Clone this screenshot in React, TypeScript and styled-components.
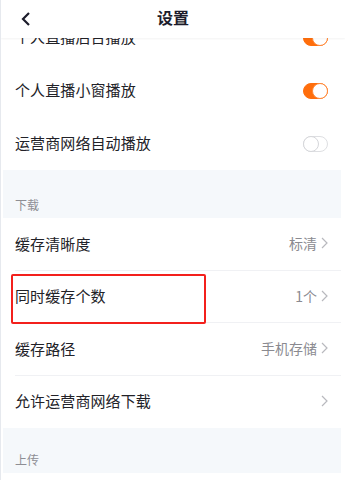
import React from "react";
import styled, { createGlobalStyle } from "styled-components";

const Global = createGlobalStyle`
  html, body { margin: 0; padding: 0; background: #fff; }
  body { font-family: "Noto Sans CJK SC", "Noto Sans", sans-serif; }
`;

const Screen = styled.div`
  position: relative;
  width: 345px;
  height: 480px;
  overflow: hidden;
  background: #fff;
  border-left: 1px solid #e6e9ee;
  box-sizing: border-box;
`;

const Header = styled.div`
  position: absolute;
  top: 0;
  left: 0;
  right: 0;
  height: 38px;
  background: #fff;
  display: grid;
  grid-template-columns: 44px 1fr 44px;
  align-items: center;
  box-shadow: 0 1px 2px rgba(0, 0, 0, 0.05);
  z-index: 2;
`;

const Back = styled.div`
  display: flex;
  align-items: center;
  justify-content: center;
  padding-left: 6px;
  height: 100%;
`;

const Title = styled.div`
  text-align: center;
  font-size: 16px;
  font-weight: 700;
  color: #1c1c2b;
  margin-top: -4px;
`;

const List = styled.div`
  padding: 11px 4px 0 2px;
  display: flex;
  flex-direction: column;
`;

const Row = styled.div<{ $divider?: boolean; $h?: number }>`
  height: ${(p) => p.$h ?? 53}px;
  flex: none;
  display: flex;
  align-items: center;
  justify-content: space-between;
  padding: 0 13px 0 12px;
  position: relative;
  background: #fff;
  ${(p) =>
    p.$divider
      ? `&::after { content: ""; position: absolute; left: 12px; right: 0; bottom: 0; height: 1px; background: #f0f1f4; }`
      : ""}
`;

const Label = styled.span`
  font-size: 15px;
  color: #222228;
  letter-spacing: 0.1px;
  margin-top: -2px;
`;

const Highlight = styled.div`
  position: absolute;
  left: 8px;
  top: 3px;
  width: 195px;
  height: 50px;
  border: 2px solid #f3201c;
  border-radius: 2px;
  box-sizing: border-box;
  pointer-events: none;
  z-index: 1;
`;

const Right = styled.span`
  display: flex;
  align-items: center;
  gap: 4px;
  color: #8a8a90;
  font-size: 14px;
  margin-top: -2px;
`;

const Section = styled.div<{ $h: number }>`
  height: ${(p) => p.$h}px;
  flex: none;
  background: #f5f8fb;
  display: flex;
  align-items: flex-end;
  padding: 0 12px 5px;
  box-sizing: border-box;
  font-size: 12px;
  color: #8e8e94;
`;

const Toggle = styled.div<{ $on?: boolean }>`
  width: 25px;
  height: 16px;
  border-radius: 8px;
  box-sizing: border-box;
  background: ${(p) => (p.$on ? "#ff6e0c" : "#fff")};
  border: 1px solid ${(p) => (p.$on ? "#ff6e0c" : "#dedfe2")};
  position: relative;
  &::after {
    content: "";
    position: absolute;
    top: -1px;
    ${(p) => (p.$on ? "right: -1px;" : "left: -1px;")}
    width: 16px;
    height: 16px;
    border-radius: 50%;
    background: #fff;
    box-sizing: border-box;
    border: 1px solid ${(p) => (p.$on ? "#ff8a3a" : "#d5d6da")};
  }
`;

const Chevron = () => (
  <svg width="7" height="12" viewBox="0 0 7 12">
    <path d="M1 1l5 5-5 5" fill="none" stroke="#b8b9be" strokeWidth="1.2" />
  </svg>
);

export default function App() {
  return (
    <>
      <Global />
      <Screen>
        <Header>
          <Back>
            <svg width="12" height="16" viewBox="0 0 12 16">
              <path d="M9 2L3 8l6 6" fill="none" stroke="#1c1c2b" strokeWidth="2.2" />
            </svg>
          </Back>
          <Title>设置</Title>
          <span />
        </Header>
        <List>
          <Row>
            <Label>个人直播后台播放</Label>
            <Toggle $on />
          </Row>
          <Row>
            <Label>个人直播小窗播放</Label>
            <Toggle $on />
          </Row>
          <Row>
            <Label>运营商网络自动播放</Label>
            <Toggle />
          </Row>
          <Section $h={48}>下载</Section>
          <Row $divider $h={52.5}>
            <Label>缓存清晰度</Label>
            <Right>
              标清
              <Chevron />
            </Right>
          </Row>
          <Row $divider $h={52.5}>
            <Highlight />
            <Label>同时缓存个数</Label>
            <Right>
              1个
              <Chevron />
            </Right>
          </Row>
          <Row $divider $h={52.5}>
            <Label>缓存路径</Label>
            <Right>
              手机存储
              <Chevron />
            </Right>
          </Row>
          <Row $h={52.5}>
            <Label>允许运营商网络下载</Label>
            <Right>
              <Chevron />
            </Right>
          </Row>
          <Section $h={45}>上传</Section>
          <Row />
        </List>
      </Screen>
    </>
  );
}
